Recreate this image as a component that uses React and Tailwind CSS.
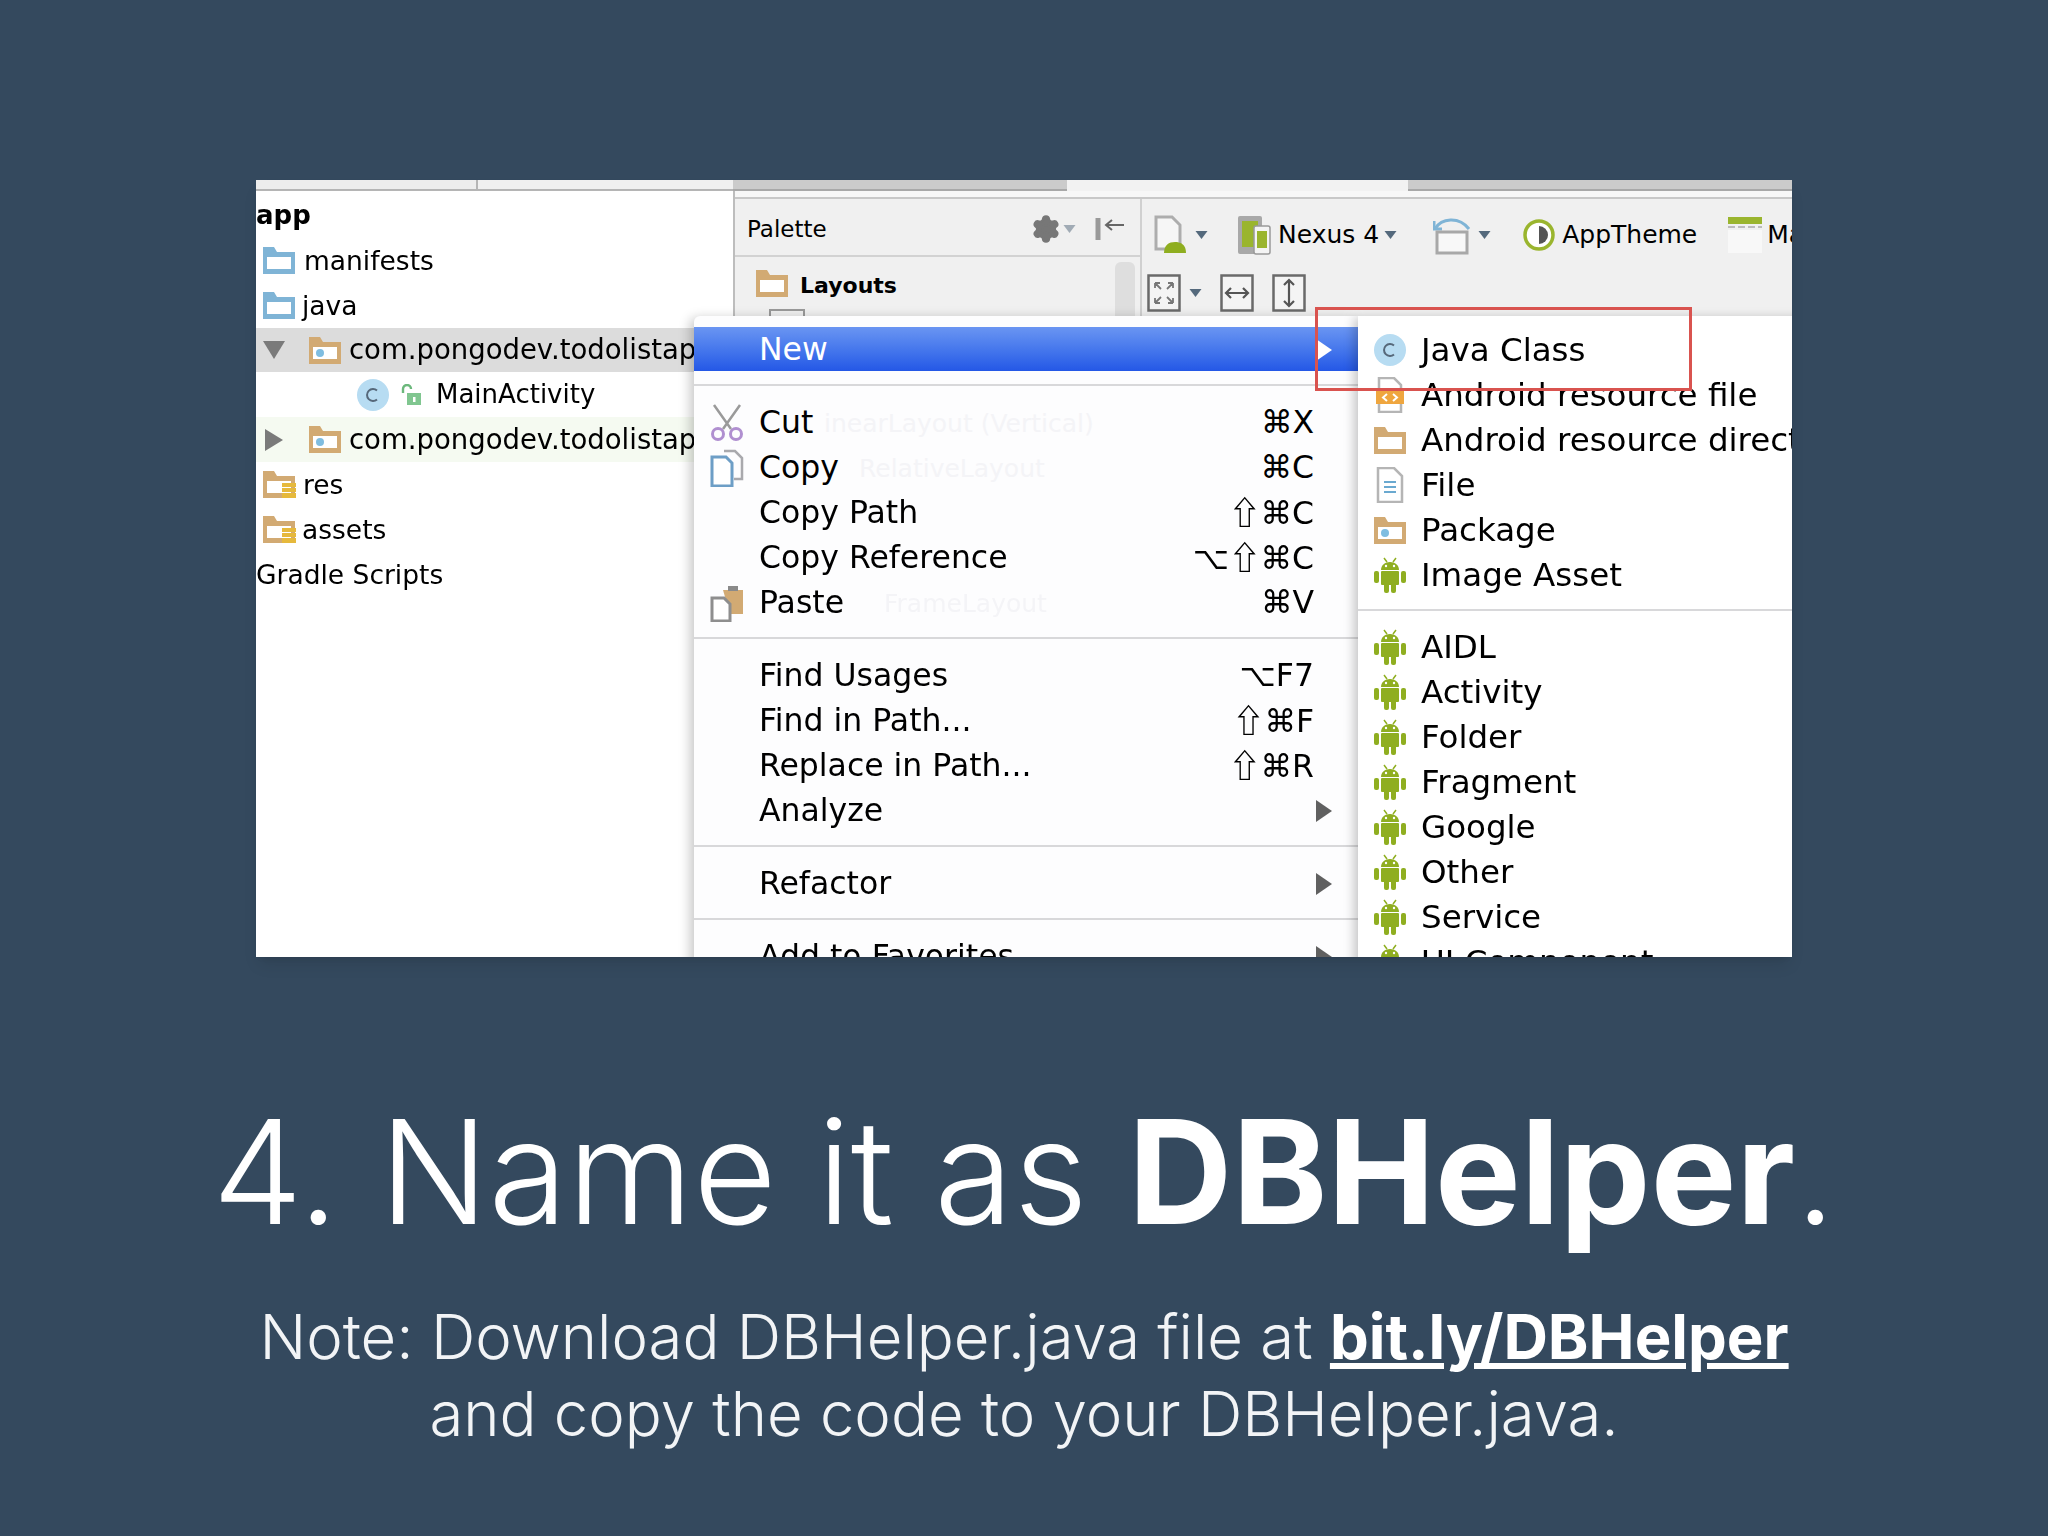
import { Settings } from "lucide-react";

const Folder = ({ color = "#d2aa73", dot, db, className = "w-[34px] h-[29px] shrink-0" }) => (
  <svg viewBox="0 0 34 29" className={className}>
    <path d="M1 1h11l3 5h18v22H1z" fill={color} />
    <rect x="5" y="11" width="24" height="12" fill="#fff" />
    {dot && <circle cx="12" cy="17" r="4" fill="#7fbde0" />}
    {db && (
      <g fill="#e6b93c">
        <rect x="20" y="13" width="15" height="4" />
        <rect x="20" y="18" width="15" height="4" />
        <rect x="20" y="23" width="15" height="5" />
      </g>
    )}
  </svg>
);

const Android = () => (
  <svg viewBox="0 0 34 36" className="w-[34px] h-[36px] shrink-0" fill="#8fae20">
    <path d="M8 13c0-5 4-8 9-8s9 3 9 8z" />
    <path d="M11 1l3 4M23 1l-3 4" stroke="#8fae20" strokeWidth="1.5" />
    <rect x="8" y="14" width="18" height="14" rx="1" />
    <rect x="1" y="14" width="5" height="12" rx="2" />
    <rect x="28" y="14" width="5" height="12" rx="2" />
    <rect x="11" y="26" width="5" height="10" rx="2" />
    <rect x="18" y="26" width="5" height="10" rx="2" />
    <circle cx="13" cy="9" r="1.2" fill="#fff" />
    <circle cx="21" cy="9" r="1.2" fill="#fff" />
  </svg>
);

const ClassIcon = () => (
  <svg viewBox="0 0 34 34" className="w-[34px] h-[34px] shrink-0">
    <circle cx="17" cy="17" r="16" fill="#b7dcf2" />
    <path d="M21 12.5a6 6 0 1 0 0 9" fill="none" stroke="#56687a" strokeWidth="2" />
  </svg>
);

const Lock = () => (
  <svg viewBox="0 0 22 22" className="w-[22px] h-[22px] shrink-0">
    <path d="M3 9V5a4 4 0 0 1 8 0" fill="none" stroke="#6cb87c" strokeWidth="2.4" />
    <rect x="7" y="9" width="14" height="12" fill="#80c690" />
    <rect x="13" y="13" width="2.5" height="5" fill="#fff" />
  </svg>
);

const Scissors = () => (
  <svg viewBox="0 0 34 38" className="w-[34px] h-[38px]" fill="none">
    <path d="M4 1l17 24M30 1L13 25" stroke="#9a9a9a" strokeWidth="2.5" />
    <circle cx="8" cy="30" r="5.5" stroke="#b08fd0" strokeWidth="3" />
    <circle cx="26" cy="30" r="5.5" stroke="#b08fd0" strokeWidth="3" />
  </svg>
);

const CopyIcon = () => (
  <svg viewBox="0 0 34 38" className="w-[34px] h-[38px]" fill="none">
    <path d="M14 2h11l7 7v21h-8" stroke="#a9a9ad" strokeWidth="2.5" />
    <path d="M2 8h14l6 6v23H2z" fill="#fff" stroke="#6d9ec6" strokeWidth="3" />
  </svg>
);

const PasteIcon = () => (
  <svg viewBox="0 0 34 38" className="w-[34px] h-[38px]" fill="none">
    <path d="M13 6h20v24H20z" fill="#d2aa73" />
    <rect x="18" y="2" width="10" height="5" fill="#8a8a8a" />
    <path d="M2 14h12l6 6v17H2z" fill="#fff" stroke="#8e8e8e" strokeWidth="3" />
  </svg>
);

const Caret = ({ className = "" }) => (
  <svg viewBox="0 0 12 8" className={`w-[13px] h-[8px] shrink-0 ${className}`}>
    <path d="M0 0h12L6 8z" fill="#54697c" />
  </svg>
);

const Arrow = ({ fill = "#606060" }) => (
  <svg viewBox="0 0 16 22" className="w-[16px] h-[22px] -mr-[18px]">
    <path d="M0 0l16 11L0 22z" fill={fill} />
  </svg>
);

const BoxIcon = ({ children, className = "" }) => (
  <svg viewBox="0 0 34 38" className={`w-[34px] h-[38px] shrink-0 ${className}`} fill="none">
    <rect x="1.5" y="1.5" width="31" height="35" fill="#f4f4f4" stroke="#6a6a6a" strokeWidth="2.5" />
    {children}
  </svg>
);

// the shift key glyph looks closer to the original in the CJK face
const Keys = ({ value }) => (
  <span className="ml-auto">
    {value.split("").map((ch, i) =>
      ch === "⇧" ? (
        <span key={i} className="font-bold font-['Noto_Sans_CJK_JP',sans-serif]">{ch}</span>
      ) : (
        ch
      )
    )}
  </span>
);

const tree = [
  { label: "manifests", icon: <Folder color="#7fb4d6" />, gap: "ml-[8px]" },
  { label: "java", icon: <Folder color="#7fb4d6" />, gap: "ml-[6px]" },
];

const menu1 = [
  { label: "Cut", key: "⌘X", icon: <Scissors />, ghost: "inearLayout (Vertical)", ghostPos: "left-[130px]" },
  { label: "Copy", key: "⌘C", icon: <CopyIcon />, ghost: "RelativeLayout", ghostPos: "left-[165px]" },
  { label: "Copy Path", key: "⇧⌘C" },
  { label: "Copy Reference", key: "⌥⇧⌘C" },
  { label: "Paste", key: "⌘V", icon: <PasteIcon />, ghost: "FrameLayout", ghostPos: "left-[190px]" },
];

const menu2 = [
  { label: "Find Usages", key: "⌥F7" },
  { label: "Find in Path...", key: "⇧⌘F" },
  { label: "Replace in Path...", key: "⇧⌘R" },
  { label: "Analyze", arrow: true },
];

const sub1 = [
  { label: "Java Class", icon: <ClassIcon /> },
  {
    label: "Android resource file",
    icon: (
      <svg viewBox="0 0 28 36" className="w-[28px] h-[36px]" fill="none">
        <path d="M3 1h15l7 7v27H3z" fill="#fff" stroke="#b5b5b5" strokeWidth="2.5" />
        <rect x="0" y="14" width="28" height="13" fill="#efa63f" />
        <path d="M11 17l-4 3.5 4 3.5M17 17l4 3.5-4 3.5" stroke="#fff" strokeWidth="2" />
      </svg>
    ),
  },
  { label: "Android resource directory", icon: <Folder /> },
  {
    label: "File",
    icon: (
      <svg viewBox="0 0 28 36" className="w-[28px] h-[36px]" fill="none">
        <path d="M2 1h16l8 8v26H2z" fill="#fff" stroke="#b5b5b5" strokeWidth="2.5" />
        <path d="M8 15h12M8 20h12M8 25h12" stroke="#6aa9d0" strokeWidth="2" />
      </svg>
    ),
  },
  { label: "Package", icon: <Folder dot /> },
  { label: "Image Asset", icon: <Android /> },
];

const sub2 = ["AIDL", "Activity", "Folder", "Fragment", "Google", "Other", "Service", "UI Component"];

const MenuRow = ({ item }) => (
  <div className="relative flex items-center h-[45px] shrink-0 pt-[2px] pl-[16px] pr-[44px]">
    <span className="flex items-center w-[49px] shrink-0">{item.icon}</span>
    <span>{item.label}</span>
    {item.ghost && (
      <span className={`absolute top-[6px] text-[25px] text-[#f4f4f7] ${item.ghostPos}`}>{item.ghost}</span>
    )}
    {item.key && <Keys value={item.key} />}
    {item.arrow && <span className="ml-auto" />}
    {item.arrow && <Arrow />}
  </div>
);

const Sep = () => <div className="h-[2px] my-[13px] shrink-0 bg-[#d8d8da]" />;

export default function App() {
  return (
    <div className="flex flex-col items-center h-[1536px] overflow-hidden bg-[#34495e] pt-[180px] text-white font-['Inter',sans-serif]">
      <section className="relative w-[1536px] h-[777px] shrink-0 overflow-hidden bg-white shadow-lg">
        <div className="flex flex-col h-full blur-[0.7px] font-['DejaVu_Sans',sans-serif] text-black">
          {/* tab strip */}
          <div className="flex h-[11px] shrink-0">
            <div className="w-[222px] bg-[#ededed] border-b-2 border-[#b5b5b5] border-r-2" />
            <div className="w-[255px] bg-[#f0f0f0] border-b-2 border-[#b5b5b5]" />
            <div className="w-[334px] bg-[#cbcbcb] border-b-2 border-[#a8a8a8]" />
            <div className="w-[341px] bg-[#f2f2f2]" />
            <div className="flex-1 bg-[#cbcbcb] border-b-2 border-[#a8a8a8]" />
          </div>

          <div className="flex flex-1 min-h-0">
            {/* project tree */}
            <div className="w-[477px] shrink-0 flex flex-col pt-[2px] text-[26.5px] whitespace-nowrap overflow-hidden">
              <div className="flex items-center h-[45px] shrink-0 font-bold text-[26px]">app</div>
              {tree.map((row) => (
                <div key={row.label} className="flex items-center h-[45px] shrink-0 pl-[6px]">
                  {row.icon}
                  <span className={row.gap}>{row.label}</span>
                </div>
              ))}
              <div className="flex items-center h-[44px] shrink-0 bg-[#dcdcdc] pl-[7px] text-[27.5px]">
                <svg viewBox="0 0 22 18" className="w-[22px] h-[18px]">
                  <path d="M0 0h22L11 18z" fill="#7a7a7a" />
                </svg>
                <span className="ml-[23px]"><Folder dot /></span>
                <span className="ml-[7px]">com.pongodev.todolistapp</span>
              </div>
              <div className="flex items-center h-[45px] shrink-0 pl-[100px] text-[26px]">
                <ClassIcon />
                <span className="ml-[10px]"><Lock /></span>
                <span className="ml-[14px]">MainActivity</span>
              </div>
              <div className="flex items-center h-[45px] shrink-0 bg-[#f5faf1] pl-[9px] text-[27.5px]">
                <svg viewBox="0 0 18 22" className="w-[18px] h-[22px]">
                  <path d="M0 0l18 11L0 22z" fill="#7a7a7a" />
                </svg>
                <span className="ml-[25px]"><Folder dot /></span>
                <span className="ml-[7px]">com.pongodev.todolistapp</span>
              </div>
              <div className="flex items-center h-[45px] shrink-0 pl-[6px]">
                <Folder db />
                <span className="ml-[7px]">res</span>
              </div>
              <div className="flex items-center h-[45px] shrink-0 pl-[6px]">
                <Folder db />
                <span className="ml-[6px]">assets</span>
              </div>
              <div className="flex items-center h-[45px] shrink-0">Gradle Scripts</div>
            </div>

            {/* palette and design toolbar */}
            <div className="flex-1 flex flex-col min-w-0 border-l-2 border-[#bdbdbd] bg-[#f0f0f0]">
              <div className="h-[8px] shrink-0 bg-[#f7f7f7] border-b-2 border-[#c8c8c8]" />
              <div className="flex flex-1 min-h-0">
                <div className="w-[407px] shrink-0 flex flex-col border-r-2 border-[#d0d0d0]">
                  <div className="flex items-center h-[58px] shrink-0 pt-[4px] pl-[12px] pr-[16px] text-[23px] border-b-2 border-[#d2d2d2]">
                    <span>Palette</span>
                    <Settings className="ml-auto w-[30px] h-[30px] text-[#777] fill-[#777]" strokeWidth={2} />
                    <Caret className="ml-[2px] opacity-50" />
                    <svg viewBox="0 0 30 24" className="ml-[18px] w-[30px] h-[24px]" fill="none">
                      <rect x="1.5" y="1" width="5" height="22" fill="#999" />
                      <path d="M30 8H13M18 3l-6 5 6 5" stroke="#666" strokeWidth="2" />
                    </svg>
                  </div>
                  <div className="flex items-start h-[52px] shrink-0 pl-[20px] pt-[5px] pr-[5px] font-bold text-[22px]">
                    <span className="mt-[7px]"><Folder /></span>
                    <span className="ml-[11px] mt-[7px]">Layouts</span>
                    <div className="ml-auto w-[20px] h-[60px] rounded-t-[6px] bg-[#dedede]" />
                  </div>
                  <div className="w-[36px] h-[8px] ml-[34px] shrink-0 border-t-2 border-x-2 border-[#999]" />
                </div>
                <div className="flex-1 flex flex-col min-w-0 whitespace-nowrap overflow-hidden text-[25px]">
                  <div className="flex items-center h-[64px] shrink-0 pl-[12px] mt-[4px]">
                    <svg viewBox="0 0 34 40" className="w-[34px] h-[40px] shrink-0" fill="none">
                      <path d="M2 2h16l8 8v24H2z" fill="#f6f6f6" stroke="#adadad" strokeWidth="3" />
                      <path d="M10 38c0-8 5-11 11-11s11 3 11 11z" fill="#8fae20" />
                    </svg>
                    <Caret className="ml-[7px]" />
                    <svg viewBox="0 0 34 40" className="ml-[29px] w-[34px] h-[40px] shrink-0">
                      <rect x="1" y="1" width="24" height="38" rx="2" fill="#a8a8a8" />
                      <rect x="5" y="6" width="16" height="26" fill="#9ab52e" />
                      <rect x="17" y="11" width="16" height="28" rx="2" fill="#f4f4f4" stroke="#999" strokeWidth="1.5" />
                      <rect x="20" y="16" width="10" height="17" fill="#9ab52e" />
                    </svg>
                    <span className="ml-[7px]">Nexus 4</span>
                    <Caret className="ml-[5px]" />
                    <svg viewBox="0 0 40 40" className="ml-[36px] w-[40px] h-[40px] shrink-0" fill="none">
                      <path d="M2 14C8 3 26 1 36 14" stroke="#7fb4d6" strokeWidth="3" />
                      <path d="M1 6v8h8" stroke="#7fb4d6" strokeWidth="3" />
                      <rect x="4" y="17" width="30" height="21" fill="#f8f8f8" stroke="#a8a8a8" strokeWidth="3" />
                    </svg>
                    <Caret className="ml-[5px]" />
                    <svg viewBox="0 0 32 32" className="ml-[32px] w-[32px] h-[32px] shrink-0">
                      <circle cx="16" cy="16" r="14" fill="#fff" stroke="#9ab52e" strokeWidth="3.5" />
                      <path d="M16 7a9 9 0 0 1 0 18z" fill="#555" />
                    </svg>
                    <span className="ml-[7px]">AppTheme</span>
                    <svg viewBox="0 0 34 36" className="ml-[31px] w-[34px] h-[36px] shrink-0">
                      <rect width="34" height="7" fill="#9ab52e" />
                      <path d="M0 10h34" stroke="#bbb" strokeWidth="2" strokeDasharray="7 3" />
                      <rect y="13" width="34" height="23" fill="#f8f8f8" />
                    </svg>
                    <span className="ml-[5px]">MainActivity</span>
                  </div>
                  <div className="flex items-center h-[52px] shrink-0 pl-[5px]">
                    <BoxIcon>
                      <path d="M8 9l6 6M26 9l-6 6M8 29l6-6M26 29l-6-6M8 9h5M8 9v5M26 9h-5M26 9v5M8 29h5M8 29v-5M26 29h-5M26 29v-5" stroke="#777" strokeWidth="1.8" />
                    </BoxIcon>
                    <Caret className="ml-[8px]" />
                    <BoxIcon className="ml-[18px]">
                      <path d="M6 19h22M11 14l-5 5 5 5M23 14l5 5-5 5" stroke="#555" strokeWidth="2.2" />
                    </BoxIcon>
                    <BoxIcon className="ml-[18px]">
                      <path d="M17 6v26M12 11l5-5 5 5M12 27l5 5 5-5" stroke="#555" strokeWidth="2.2" />
                    </BoxIcon>
                  </div>
                </div>
              </div>
            </div>
          </div>

          {/* context menu */}
          <div className="absolute left-[438px] top-[136px] w-[664px] h-[700px] flex flex-col pt-[11px] rounded-tl-[6px] bg-[#fdfdfe] shadow-[-4px_2px_12px_rgba(0,0,0,0.22)] text-[31.5px] whitespace-nowrap">
            <div className="flex items-center h-[44px] shrink-0 pt-[2px] pl-[65px] pr-[26px] text-white bg-gradient-to-b from-[#6a95f2] to-[#2457e6]">
              <span>New</span>
              <svg viewBox="0 0 16 22" className="ml-auto w-[16px] h-[22px]">
                <path d="M0 0l16 11L0 22z" fill="#fff" />
              </svg>
            </div>
            <Sep />
            {menu1.map((item) => <MenuRow key={item.label} item={item} />)}
            <Sep />
            {menu2.map((item) => <MenuRow key={item.label} item={item} />)}
            <Sep />
            <MenuRow item={{ label: "Refactor", arrow: true }} />
            <Sep />
            <MenuRow item={{ label: "Add to Favorites", arrow: true }} />
          </div>

          {/* New submenu */}
          <div className="absolute left-[1102px] top-[136px] w-[460px] h-[700px] flex flex-col pt-[11px] bg-white shadow-[-4px_2px_10px_rgba(0,0,0,0.22)] text-[32.5px] whitespace-nowrap overflow-hidden">
            {sub1.map((item) => (
              <div key={item.label} className="flex items-center h-[45px] shrink-0 pt-[1px] pl-[15px]">
                <span className="flex items-center justify-center w-[34px] shrink-0">{item.icon}</span>
                <span className="ml-[14px]">{item.label}</span>
              </div>
            ))}
            <div className="h-[2px] mt-[12px] mb-[13px] shrink-0 bg-[#d8d8da]" />
            {sub2.map((label) => (
              <div key={label} className="flex items-center h-[45px] shrink-0 pt-[1px] pl-[15px]">
                <Android />
                <span className="ml-[14px]">{label}</span>
              </div>
            ))}
          </div>
        </div>

        {/* red highlight */}
        <div className="absolute left-[1059px] top-[127px] w-[377px] h-[84px] border-[3px] border-[#d9534f]" />
      </section>

      <h1 className="mt-[130px] text-[144px] leading-[170px] font-light whitespace-nowrap">
        4. Name it as <span className="font-bold">DBHelper</span>.
      </h1>
      <p className="mt-[41px] text-center text-[61.6px] leading-[77px] font-light text-[#f2f4f6] whitespace-nowrap">
        Note: Download DBHelper.java file at <a className="font-bold underline text-white">bit.ly/DBHelper</a>
        <br />
        and copy the code to your DBHelper.java.
      </p>
    </div>
  );
}
